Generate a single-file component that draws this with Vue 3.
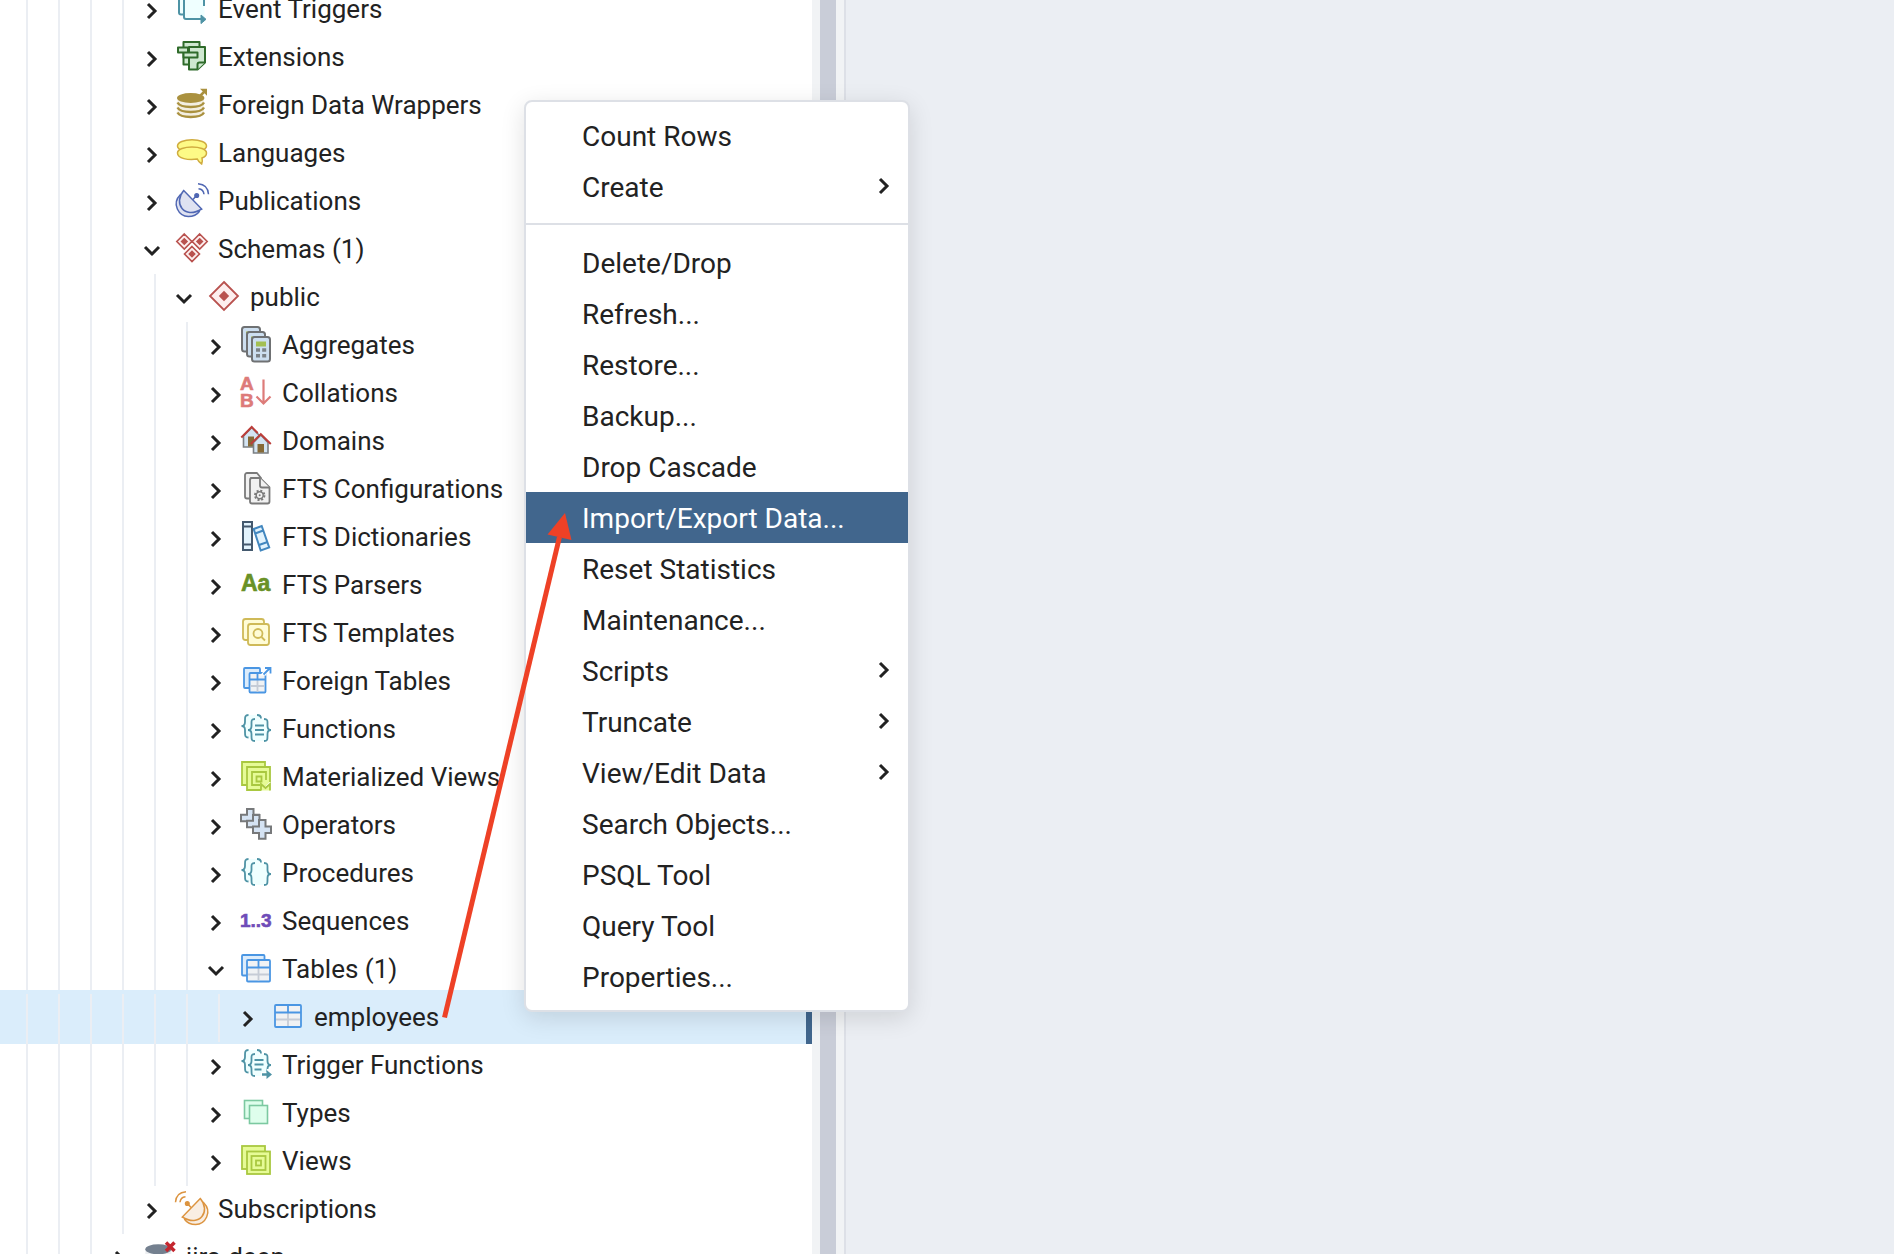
<script setup>
import { ref } from 'vue'

const rows = ref([
    { label: 'Event Triggers', icon: 'event-trigger', level: 4 },
    { label: 'Extensions', icon: 'extension', level: 4 },
    { label: 'Foreign Data Wrappers', icon: 'fdw', level: 4 },
    { label: 'Languages', icon: 'language', level: 4 },
    { label: 'Publications', icon: 'publication', level: 4 },
    { label: 'Schemas (1)', icon: 'schemas', level: 4, open: true },
    { label: 'public', icon: 'schema', level: 5, open: true },
    { label: 'Aggregates', icon: 'aggregate', level: 6 },
    { label: 'Collations', icon: 'collation', level: 6 },
    { label: 'Domains', icon: 'domain', level: 6 },
    { label: 'FTS Configurations', icon: 'fts-config', level: 6 },
    { label: 'FTS Dictionaries', icon: 'fts-dictionary', level: 6 },
    { label: 'FTS Parsers', icon: 'fts-parser', level: 6 },
    { label: 'FTS Templates', icon: 'fts-template', level: 6 },
    { label: 'Foreign Tables', icon: 'foreign-table', level: 6 },
    { label: 'Functions', icon: 'function', level: 6 },
    { label: 'Materialized Views', icon: 'mview', level: 6 },
    { label: 'Operators', icon: 'operator', level: 6 },
    { label: 'Procedures', icon: 'procedure', level: 6 },
    { label: 'Sequences', icon: 'sequence', level: 6 },
    { label: 'Tables (1)', icon: 'tables', level: 6, open: true },
    { label: 'employees', icon: 'table', level: 7, selected: true },
    { label: 'Trigger Functions', icon: 'trigger-function', level: 6 },
    { label: 'Types', icon: 'type', level: 6 },
    { label: 'Views', icon: 'view', level: 6 },
    { label: 'Subscriptions', icon: 'subscription', level: 4 },
    { label: 'jira-deep', icon: 'database-off', level: 3 },
])

const menuGroups = [
    [
        { label: 'Count Rows' },
        { label: 'Create', submenu: true },
    ],
    [
        { label: 'Delete/Drop' },
        { label: 'Refresh...' },
        { label: 'Restore...' },
        { label: 'Backup...' },
        { label: 'Drop Cascade' },
        { label: 'Import/Export Data...' },
        { label: 'Reset Statistics' },
        { label: 'Maintenance...' },
        { label: 'Scripts', submenu: true },
        { label: 'Truncate', submenu: true },
        { label: 'View/Edit Data', submenu: true },
        { label: 'Search Objects...' },
        { label: 'PSQL Tool' },
        { label: 'Query Tool' },
        { label: 'Properties...' },
    ],
]

const activeItem = ref('Import/Export Data...')

const selectRow = (row) => {
    rows.value.forEach((r) => { r.selected = r === row })
}
</script>

<template>
    <div class="workspace">
        <!-- Icon sheet, every icon is drawn on a 32 x 32 grid -->
        <svg class="icon-sheet" aria-hidden="true">
            <defs>
                <g id="icon-event-trigger" fill="#efffff" stroke="#4e93a5" stroke-width="2">
                    <path d="M7 22.500H5a2 2 0 0 1-2-2V3H22" />
                    <path d="M8 6h20.500v20H8z" stroke="none" />
                    <path d="M28 14V6M8 6V25a2 2 0 0 0 2 2H25" fill="none" />
                    <path d="M25 23l5 4.300-5 4.300z" fill="#4e93a5" stroke-width="1" />
                </g>
                <g id="icon-extension" fill="#cfe8d0" stroke="#2f6b2a" stroke-width="2" stroke-linejoin="round">
                    <path d="M7.500 2h16v6h-16zM7.500 12h6v12.500h-6z" />
                    <path d="M13 7h16v15.500l-7.500 7H13z" />
                    <path d="M29 22.500h-5.500a2 2 0 0 0-2 2V29.500" />
                    <path d="M2 7.500h10v5H2zM7.500 12.500h14v5h-14z" />
                </g>
                <g id="icon-fdw">
                    <path d="M1.500 12v13c0 6 26.500 6 26.500 0V12z" fill="#f3eee0" />
                    <ellipse cx="14.700" cy="10" rx="13.700" ry="5" fill="#aa913f" />
                    <path d="M1.500 14.500c3 6 23.500 6 26.500 0M1.500 19.500c3 6 23.500 6 26.500 0M1.500 24.500c3 6 23.500 6 26.500 0" fill="none" stroke="#aa913f" stroke-width="2.400" />
                    <path d="M24 8l4.500-4.500" stroke="#aa913f" stroke-width="2.500" />
                    <path d="M24 .8h7v7z" fill="#aa913f" />
                </g>
                <g id="icon-language" fill="#fdfa86" stroke="#d0ac3f" stroke-width="1.500">
                    <ellipse cx="16" cy="10" rx="14.500" ry="6.300" />
                    <path d="M1.500 17c0-8 29-8 29 0 0 2.500-2 4.200-4.500 5 .5 2 .5 4-.3 6-2.200-1.400-3.700-3-4.400-4.900C12 24.500 1.500 22.500 1.500 17z" />
                </g>
                <g id="icon-dish">
                    <path d="M4.500 10.500C-5 20 3 32.500 12.300 32.500c4.500 0 8.500-1.500 11-5z" />
                    <path d="M7.700 6.500L25.700 25C8 36-3 19 7.700 6.500z" />
                    <path d="M17 15.500l3-3.500" fill="none" />
                    <circle cx="20.700" cy="11.500" r="1.800" fill="currentColor" />
                    <path d="M22.500 4.800q5 .5 5.500 5.500M22-.3Q32 .5 32.500 10.300" fill="none" />
                </g>
                <g id="icon-publication" color="#5067b3" fill="#dfe2f1" stroke="#5067b3" stroke-width="1.500">
                    <use href="#icon-dish" />
                </g>
                <g id="icon-subscription" color="#dc9440" fill="#f9eee3" stroke="#dc9440" stroke-width="1.500" transform="matrix(-1 0 0 1 32 0)">
                    <use href="#icon-dish" />
                </g>
                <g id="icon-schemas">
                    <path d="M8.300 2l7.500 7.500-7.500 7.500L.8 9.500zM23.700 2l7.500 7.500-7.500 7.500-7.500-7.500zM16 14.500l7.500 7.500-7.500 7.500L8.500 22z" fill="#fdeeee" stroke="#b9524f" stroke-width="1.600" />
                    <path d="M8.300 5.700l3.800 3.800-3.800 3.800-3.800-3.800zM23.700 5.700l3.800 3.800-3.800 3.800-3.800-3.800zM16 18.200l3.800 3.800-3.800 3.800-3.800-3.800z" fill="#b9524f" />
                </g>
                <g id="icon-schema">
                    <path d="M16 2l14 14-14 14L2 16z" fill="#fdeeee" stroke="#b9524f" stroke-width="1.800" />
                    <path d="M16 10.800l5.200 5.200-5.200 5.200-5.200-5.200z" fill="#b9524f" />
                </g>
                <g id="icon-aggregate" fill="#cddff0" stroke="#6f7173" stroke-width="2">
                    <rect x="2" y="-1" width="18" height="24.500" rx="2.500" />
                    <path d="M6 4.500h3" stroke="#a8bf4f" />
                    <rect x="7" y="4" width="18" height="24.500" rx="2.500" />
                    <path d="M11 9.500h3" stroke="#a8bf4f" />
                    <rect x="12" y="9" width="18" height="24.500" rx="2.500" />
                    <path d="M16 13.500h10v5H16z" fill="#a3bf52" stroke="none" />
                    <path d="M16 20.200h4v3.500h-4zM22.200 20.200h4v3.500h-4zM16 26h4v3.500h-4zM22.200 26h4v3.500h-4z" fill="#7c8287" stroke="none" />
                </g>
                <g id="icon-collation" stroke="#dd7b79">
                    <text x="0" y="14" class="icon-text" font-size="19" fill="#dd7b79">A</text>
                    <text x="0" y="31" class="icon-text" font-size="19" fill="#dd7b79">B</text>
                    <path d="M23.500 3.500V27M16.500 20.500l7 7 7-7" fill="none" stroke-width="2.200" />
                </g>
                <g id="icon-domain">
                    <path d="M3.500 12l8.200-8.500 8.200 8.500v11H3.500z" fill="#d3e4f3" stroke="#7b7f83" stroke-width="1.600" />
                    <path d="M8 12.500h6v10H8z" fill="#866a38" />
                    <path d="M1.300 13.500L11.700 3l6 6" fill="none" stroke="#bc3e3a" stroke-width="2" />
                    <path d="M13.500 18.500l7.300-7.500 7.200 7.500v10.500H13.500z" fill="#d3e4f3" stroke="#7b7f83" stroke-width="1.600" />
                    <path d="M17.500 20h6.500v8.500h-6.500z" fill="#866a38" />
                    <path d="M10.800 20l10-9.800 10 9.800" fill="none" stroke="#bc3e3a" stroke-width="2" />
                </g>
                <g id="icon-fts-config" fill="#f1f1f1" stroke="#7a7a7a" stroke-width="1.800" stroke-linejoin="round">
                    <path d="M17 1H7a2 2 0 0 0-2 2v21.500a2 2 0 0 0 2 2h4V6h10z" />
                    <path d="M20 6h-8a2 2 0 0 0-2 2v21.500a2 2 0 0 0 2 2h15.500a2 2 0 0 0 2-2V15.500z" />
                    <path d="M20 6v7.500a2 2 0 0 0 2 2h7.500" />
                    <circle cx="19.700" cy="23.300" r="4.700" stroke-dasharray="2 1.690" stroke-width="2" fill="none" />
                    <circle cx="19.700" cy="23.300" r="3.500" stroke-width="1.500" />
                    <circle cx="19.700" cy="23.300" r="1" fill="#7a7a7a" stroke="none" />
                </g>
                <g id="icon-fts-dictionary" fill="#e2f3fd" stroke-width="2">
                    <path d="M3 2h9v28H3zM3 6.500h9M3 24.500h9" stroke="#44596e" />
                    <path d="M13.700 9l8-3 7.500 21.500-8.500 3zM15.200 13.500l8-3M19 25l8.500-3" stroke="#4287bf" />
                </g>
                <g id="icon-fts-parser">
                    <text x="1" y="23" class="icon-text" font-size="23" fill="#699126" stroke="#699126">Aa</text>
                </g>
                <g id="icon-fts-template" fill="#fffcd6" stroke="#cfba58" stroke-width="1.800">
                    <rect x="3" y="3" width="21" height="21" rx="2.500" />
                    <rect x="8" y="8" width="21" height="21" rx="2.500" />
                    <circle cx="18" cy="17.500" r="4.500" />
                    <path d="M21.500 21l3.500 3.500" />
                </g>
                <g id="icon-foreign-table" fill="#f0f2f4" stroke="#4a96e3" stroke-width="1.800">
                    <rect x="4" y="4" width="16" height="20" rx="1" fill="#dcecfb" />
                    <rect x="9.500" y="9" width="16" height="19.500" rx="1" />
                    <path d="M17.500 16v12M10.500 22h14" stroke="#c6ccd6" />
                    <path d="M17.500 9v6.500M9.500 15.500h16" />
                    <path d="M22 10.500h3.500v-4z" fill="#fff" stroke="#fff" />
                    <path d="M23.500 10.500l6-6M25 4h5.500v5.500" fill="none" />
                </g>
                <g id="icon-braces" fill="none" stroke="#4e93a5" stroke-width="1.800">
                    <path d="M8.500 3C5 3 5 5 5 8v2c0 2.500-1 4-3.500 4C4 14 5 15.500 5 18v2c0 3.500 0 5.500 3.500 5.500H13L20 3z" fill="#efffff" stroke="none" />
                    <path d="M8.500 3C5 3 5 5 5 8v2c0 2.500-1 4-3.500 4C4 14 5 15.500 5 18v2c0 3.500 0 5.500 3.500 5.500M17 3c3 0 4 1 4 3.500" />
                    <path d="M15 7c-4 0-3.500 2-3.500 5v2c0 2.500-1 4-3.500 4 2.500 0 3.500 1.500 3.500 4v2c0 3.500 0 5 3.500 5h9.500c4 0 3.500-2 3.500-5v-2c0-2.500 1-4 3.500-4-2.500 0-3.500-1.500-3.500-4v-2c0-3 0-5-3.500-5z" fill="#efffff" stroke="none" />
                    <path d="M15 7c-4 0-3.500 2-3.500 5v2c0 2.500-1 4-3.500 4 2.500 0 3.500 1.500 3.500 4v2c0 3.500 0 5 3.500 5M24 7c4 0 3.500 2 3.500 5v2c0 2.500 1 4 3.500 4-2.500 0-3.500 1.500-3.500 4v2c0 3.500 0 5-3.500 5" />
                </g>
                <g id="icon-function">
                    <use href="#icon-braces" />
                    <path d="M15 13.500h9M15 18h9M15 22.500h9" stroke="#4e93a5" stroke-width="1.800" />
                </g>
                <g id="icon-procedure">
                    <use href="#icon-braces" />
                </g>
                <g id="icon-mview" fill="#e6fb96" stroke="#a9c840" stroke-width="1.800">
                    <path d="M2 2h23v23H2z" />
                    <path d="M30 22V7H7v23h14" />
                    <path d="M26 20v-8H12v13h8" />
                    <path d="M16.500 16.500h5v5h-5z" />
                    <path d="M21 30.500V24l4.500 4 4.500-4v6.500" />
                </g>
                <g id="icon-operator" fill="#d5e3f3" stroke="#77797b" stroke-width="2">
                    <path d="M7 1h6.500v5.700H19v6.500h-5.500V19H7v-5.800H1V6.700h6z" />
                    <path d="M13 7h6.500v5.700H25v6.500h-5.500V25H13v-5.800H7v-6.500h6z" />
                    <path d="M19 12h6.500v6.500H31V25h-5.500v5.700H19V25h-6v-6.500h6z" />
                </g>
                <g id="icon-sequence">
                    <text x="0" y="23" class="icon-text" font-size="19" fill="#6f4cb8" stroke="#6f4cb8">1..3</text>
                </g>
                <g id="icon-tables" fill="#f0f2f4" stroke="#4a96e3" stroke-width="1.800">
                    <rect x="2" y="3" width="22.500" height="20.500" rx="1" fill="#dcecfb" />
                    <rect x="7" y="8" width="23" height="21.500" rx="1" />
                    <path d="M18.500 16v12.500M8 22.500h21" stroke="#c6ccd6" />
                    <path d="M18.500 8v7.500M7 15.500h23" />
                </g>
                <g id="icon-table" fill="#f0f2f4" stroke="#4a96e3" stroke-width="1.800">
                    <rect x="3" y="5" width="26" height="22" rx="1" />
                    <path d="M16 13v13M4 19.500h24" stroke="#c6ccd6" />
                    <path d="M16 5v7.500M3 12.500h26" />
                </g>
                <g id="icon-trigger-function">
                    <use href="#icon-braces" transform="translate(0 -1)" />
                    <path d="M14.500 12h9M14.500 16.500h9M14.500 21.500h7" stroke="#4e93a5" stroke-width="1.800" />
                    <path d="M21 24h6v-3h6v10H21z" fill="#fff" />
                    <path d="M22 26.500h5" stroke="#4e93a5" stroke-width="2.500" />
                    <path d="M26.500 22l5.500 4.500-5.500 4.500z" fill="#4e93a5" />
                </g>
                <g id="icon-type" fill="#defeec" stroke="#7cc9a1" stroke-width="1.600">
                    <rect x="4.500" y="4.500" width="18" height="18" />
                    <rect x="9.500" y="9.500" width="18" height="18" />
                </g>
                <g id="icon-view" fill="#e6fb96" stroke="#a9c840" stroke-width="1.800">
                    <rect x="2" y="2" width="23" height="23" />
                    <rect x="7" y="7.500" width="23" height="22.500" />
                    <rect x="11.500" y="12" width="14" height="14" />
                    <rect x="16" y="16.500" width="5" height="5" />
                </g>
                <g id="icon-database-off">
                    <path d="M1.300 9v16h26V9z" fill="#eceef1" />
                    <ellipse cx="14.300" cy="9.300" rx="13" ry="5" fill="#74808f" />
                    <path d="M22 2.500l8.500 8.500M30.500 2.500L22 11" stroke="#c4262e" stroke-width="3.500" />
                </g>
            </defs>
        </svg>

        <aside class="browser-panel">
            <ul class="tree" role="tree">
                <li
                    v-for="row in rows"
                    :key="row.label"
                    class="tree-row"
                    :class="{ selected: row.selected }"
                    role="treeitem"
                    @click="selectRow(row)"
                >
                    <span v-for="n in row.level" :key="n" class="guide"></span>
                    <button type="button" class="toggle" :aria-label="'Toggle ' + row.label" @click.stop="row.open = !row.open">
                        <svg viewBox="0 0 24 24">
                            <path :d="row.open ? 'M5 8l7 7 7-7' : 'M8 5l7 7-7 7'" />
                        </svg>
                    </button>
                    <svg class="row-icon" viewBox="0 0 32 32"><use :href="'#icon-' + row.icon" /></svg>
                    <span class="row-label">{{ row.label }}</span>
                </li>
            </ul>
        </aside>

        <div class="splitter" role="separator"></div>

        <main class="content-panel"></main>

        <div class="context-menu" role="menu">
            <div v-for="(group, index) in menuGroups" :key="index" class="menu-group">
                <button
                    v-for="item in group"
                    :key="item.label"
                    type="button"
                    class="menu-item"
                    :class="{ active: item.label === activeItem }"
                    role="menuitem"
                    @mouseenter="activeItem = item.label"
                >
                    <span>{{ item.label }}</span>
                    <svg v-if="item.submenu" viewBox="0 0 24 24"><path d="M8 5l7 7-7 7" /></svg>
                </button>
            </div>
        </div>

        <!-- Pointer from the table to the menu entry -->
        <svg class="pointer-arrow" aria-hidden="true">
            <path d="M444.500 1017.500L559.500 537" fill="none" stroke="#ee4126" stroke-width="5" />
            <path d="M565 513l6.500 27-24-5.500z" fill="#ee4126" />
        </svg>
    </div>
</template>

<style>
body {
  margin: 0;
}
</style>

<style scoped>
.workspace {
  position: relative;
  display: flex;
  height: 100vh;
  overflow: hidden;
  background: #ebeef3;
  color: #222;
  font-family: Roboto, "Liberation Sans", sans-serif;
  font-size: 26px;
}

.icon-sheet {
  position: absolute;
  width: 0;
  height: 0;
}

.icon-text {
  font-family: "Liberation Sans", Arial, sans-serif;
  font-weight: 700;
  stroke-width: 0.6;
}

/* =====================================
   OBJECT TREE
===================================== */
.browser-panel {
  flex: 812 1 0;
  min-width: 0;
  background: #fff;
}

.tree {
  margin: -14px 0 0;
  padding: 0;
  list-style: none;
}

.tree-row {
  position: relative;
  display: flex;
  align-items: center;
  height: 48px;
  padding-left: 12px;
  white-space: nowrap;
  cursor: pointer;
}

/* highlight reaches a little over its neighbours */
.tree-row.selected::before {
  content: "";
  position: absolute;
  top: -4px;
  right: 0;
  bottom: -2px;
  left: 0;
  border-right: 6px solid #41668d;
  background: #daedfb;
}

.guide {
  position: relative;
  flex: none;
  box-sizing: border-box;
  width: 18px;
  height: 48px;
  margin-left: 14px;
  border-left: 2px solid #ebeef3;
}

.toggle {
  position: relative;
  flex: none;
  width: 24px;
  height: 24px;
  margin: 2px 12px 0 0;
  padding: 0;
  border: none;
  background: none;
  cursor: pointer;
}

.toggle svg,
.menu-item svg {
  display: block;
  width: 24px;
  height: 24px;
  fill: none;
  stroke: #222;
  stroke-width: 3;
}

.row-icon {
  position: relative;
  flex: none;
  width: 32px;
  height: 32px;
  margin: 0 10px 4px 0;
  overflow: visible;
}

.row-label {
  position: relative;
  padding-bottom: 2px;
}

/* =====================================
   SPLITTER + RIGHT PANEL
===================================== */
.splitter {
  flex: none;
  width: 16px;
  border: solid #f1f3f5;
  border-width: 0 8px;
  background: #c9cdd8;
}

.content-panel {
  flex: 1048 1 0;
  border-left: 2px solid #dde0e7;
  background: #ebeef3;
}

/* =====================================
   CONTEXT MENU
===================================== */
.context-menu {
  position: absolute;
  top: 100px;
  left: 524px;
  box-sizing: border-box;
  width: 386px;
  padding: 8px 0;
  border: 2px solid #dde0e6;
  border-radius: 8px;
  background: #fff;
  box-shadow: 0 6px 24px rgba(0, 0, 0, 0.12);
  font-size: 28px;
}

.menu-group + .menu-group {
  margin-top: 11px;
  padding-top: 12px;
  border-top: 2px solid #dde0e6;
}

.menu-item {
  display: flex;
  align-items: center;
  justify-content: space-between;
  width: 100%;
  height: 51px;
  padding: 2px 12px 0 56px;
  border: none;
  background: none;
  color: inherit;
  font: inherit;
  text-align: left;
  cursor: pointer;
}

.menu-item svg {
  margin-bottom: 4px;
}

.menu-item.active {
  background: #41668d;
  color: #fff;
}

.pointer-arrow {
  position: absolute;
  top: 0;
  left: 0;
  width: 100%;
  height: 100%;
  pointer-events: none;
}
</style>
